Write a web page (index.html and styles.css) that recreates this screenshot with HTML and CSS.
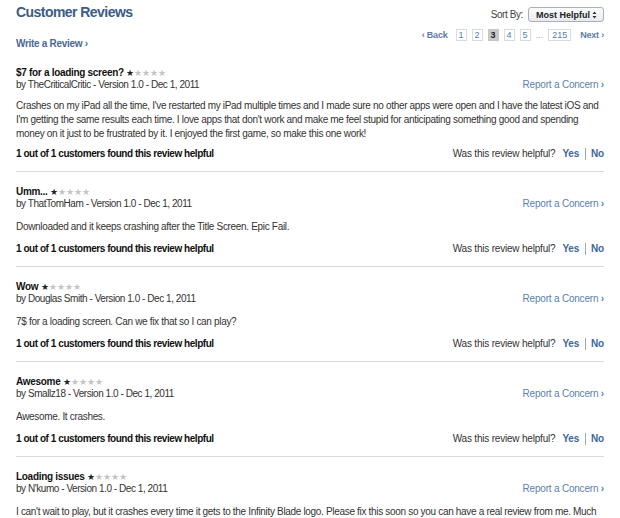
FILE: index.html
```html
<!DOCTYPE html>
<html lang="en">
<head>
<meta charset="utf-8">
<title>Customer Reviews</title>
<link rel="stylesheet" href="styles.css">
</head>
<body>
<div class="page">
  <header class="top">
    <div class="top-left">
      <h1 class="title">Customer Reviews</h1>
      <a class="write" href="#">Write a Review <span class="chev">›</span></a>
    </div>
    <div class="top-right">
      <div class="sort">
        <span class="sort-label">Sort By:</span>
        <div class="select">
          <span class="select-text">Most Helpful</span>
          <svg class="select-arrows" width="5" height="8" viewBox="0 0 5 8"><path d="M0.5 3 L2.5 0.5 L4.5 3 Z M0.5 5 L2.5 7.5 L4.5 5 Z" fill="#333"/></svg>
        </div>
      </div>
      <nav class="pager">
        <a class="pg-link" href="#"><span class="chev">‹</span> Back</a>
        <a class="pg" href="#">1</a>
        <a class="pg" href="#">2</a>
        <span class="pg current">3</span>
        <a class="pg" href="#">4</a>
        <a class="pg" href="#">5</a>
        <span class="pg-dots">...</span>
        <a class="pg wide" href="#">215</a>
        <a class="pg-link next" href="#">Next <span class="chev">›</span></a>
      </nav>
    </div>
  </header>

  <section class="reviews">
    <article class="review">
      <div class="rv-head">
        <div class="rv-meta">
          <div class="rv-title">$7 for a loading screen? <span class="stars"><span class="on">★</span>★★★★</span></div>
          <div class="rv-by">by TheCriticalCritic - Version 1.0 - Dec 1, 2011</div>
        </div>
        <a class="report" href="#">Report a Concern <span class="chev">›</span></a>
      </div>
      <p class="rv-body">Crashes on my iPad all the time, I've restarted my iPad multiple times and I made sure no other apps were open and I have the latest iOS and I'm getting the same results each time. I love apps that don't work and make me feel stupid for anticipating something good and spending money on it just to be frustrated by it. I enjoyed the first game, so make this one work!</p>
      <div class="rv-foot">
        <span class="helpful">1 out of 1 customers found this review helpful</span>
        <span class="vote">Was this review helpful? <a href="#">Yes</a><span class="bar"></span><a href="#">No</a></span>
      </div>
    </article>

    <article class="review">
      <div class="rv-head">
        <div class="rv-meta">
          <div class="rv-title">Umm... <span class="stars"><span class="on">★</span>★★★★</span></div>
          <div class="rv-by">by ThatTomHam - Version 1.0 - Dec 1, 2011</div>
        </div>
        <a class="report" href="#">Report a Concern <span class="chev">›</span></a>
      </div>
      <p class="rv-body">Downloaded and it keeps crashing after the Title Screen. Epic Fail.</p>
      <div class="rv-foot">
        <span class="helpful">1 out of 1 customers found this review helpful</span>
        <span class="vote">Was this review helpful? <a href="#">Yes</a><span class="bar"></span><a href="#">No</a></span>
      </div>
    </article>

    <article class="review">
      <div class="rv-head">
        <div class="rv-meta">
          <div class="rv-title">Wow <span class="stars"><span class="on">★</span>★★★★</span></div>
          <div class="rv-by">by Douglas Smith - Version 1.0 - Dec 1, 2011</div>
        </div>
        <a class="report" href="#">Report a Concern <span class="chev">›</span></a>
      </div>
      <p class="rv-body">7$ for a loading screen. Can we fix that so I can play?</p>
      <div class="rv-foot">
        <span class="helpful">1 out of 1 customers found this review helpful</span>
        <span class="vote">Was this review helpful? <a href="#">Yes</a><span class="bar"></span><a href="#">No</a></span>
      </div>
    </article>

    <article class="review">
      <div class="rv-head">
        <div class="rv-meta">
          <div class="rv-title">Awesome <span class="stars"><span class="on">★</span>★★★★</span></div>
          <div class="rv-by">by Smallz18 - Version 1.0 - Dec 1, 2011</div>
        </div>
        <a class="report" href="#">Report a Concern <span class="chev">›</span></a>
      </div>
      <p class="rv-body">Awesome. It crashes.</p>
      <div class="rv-foot">
        <span class="helpful">1 out of 1 customers found this review helpful</span>
        <span class="vote">Was this review helpful? <a href="#">Yes</a><span class="bar"></span><a href="#">No</a></span>
      </div>
    </article>

    <article class="review">
      <div class="rv-head">
        <div class="rv-meta">
          <div class="rv-title">Loading issues <span class="stars"><span class="on">★</span>★★★★</span></div>
          <div class="rv-by">by N'kumo - Version 1.0 - Dec 1, 2011</div>
        </div>
        <a class="report" href="#">Report a Concern <span class="chev">›</span></a>
      </div>
      <p class="rv-body">I can't wait to play, but it crashes every time it gets to the Infinity Blade logo. Please fix this soon so you can have a real review from me. Much appreciated, and I hope the update comes quickly.</p>
    </article>
  </section>
</div>
</body>
</html>
```

FILE: styles.css
```css
* { box-sizing: border-box; }

html, body {
  margin: 0;
  padding: 0;
  background: #ffffff;
}

body {
  font-family: "Liberation Sans", Arial, Helvetica, sans-serif;
  font-size: 10px;
  color: #333333;
  overflow: hidden;
}

a { text-decoration: none; }

.page {
  width: 620px;
  height: 518px;
  padding: 4px 16px 0 16px;
}

.chev {
  font-weight: bold;
}

/* ---------- header ---------- */
.top {
  display: flex;
  justify-content: space-between;
  align-items: flex-start;
}

.top-left {
  display: flex;
  flex-direction: column;
  align-items: flex-start;
}

.title {
  margin: 0;
  font-size: 14px;
  line-height: 16px;
  font-weight: bold;
  color: #3b5b88;
  letter-spacing: -0.55px;
}

.write {
  margin-top: 18px;
  font-size: 10px;
  line-height: 12px;
  font-weight: bold;
  color: #4a6994;
  letter-spacing: -0.3px;
}

.top-right {
  display: flex;
  flex-direction: column;
  align-items: flex-end;
}

.sort {
  display: flex;
  align-items: center;
  gap: 5px;
  margin-top: 3px;
}

.sort-label {
  font-size: 10px;
  color: #444;
  letter-spacing: -0.4px;
}

.select {
  width: 76px;
  height: 15px;
  border: 1px solid #a9b0ba;
  border-radius: 3px;
  background: linear-gradient(#fbfcfd, #e6eaef);
  display: flex;
  align-items: center;
  justify-content: space-between;
  padding: 0 6px 0 7px;
  font-size: 9px;
  font-weight: bold;
  color: #222;
}

.pager {
  display: flex;
  align-items: center;
  margin-top: 7px;
  gap: 5px;
  font-size: 9px;
  color: #5c7ca6;
}

.pg-link {
  color: #5c7ca6;
  font-size: 9px;
  font-weight: bold;
  margin-right: 3px;
  letter-spacing: -0.2px;
}

.pg-link.next {
  margin-right: 0;
  margin-left: 4px;
}

.pg {
  min-width: 11px;
  height: 12px;
  padding: 0 2px;
  border: 1px solid #d3dbe6;
  display: inline-flex;
  align-items: center;
  justify-content: center;
  color: #5c7ca6;
  font-size: 9px;
}

.pg.wide {
  padding: 0 3px;
}

.pg.current {
  border-color: #c6c6c6;
  background: #c9c9c9;
  color: #222;
  font-weight: bold;
}

.pg-dots {
  color: #8a9bb3;
}

/* ---------- reviews ---------- */
.reviews {
  margin-top: 16px;
}

.review {
  padding: 14px 0 10px 0;
  border-top: 1px solid #d9d9d9;
}

.review:first-child {
  border-top: none;
  padding-top: 1px;
}

.rv-head {
  display: flex;
  justify-content: space-between;
  align-items: flex-end;
}

.rv-title {
  font-size: 10px;
  line-height: 12px;
  font-weight: bold;
  color: #111;
  letter-spacing: -0.3px;
}

.stars {
  font-weight: normal;
  font-size: 9px;
  color: #c4c4c4;
  letter-spacing: 0;
}

.stars .on {
  color: #222;
}

.rv-by {
  font-size: 10px;
  line-height: 12px;
  color: #333;
  letter-spacing: -0.45px;
}

.report {
  font-size: 10px;
  line-height: 12px;
  color: #5b7fae;
  letter-spacing: -0.2px;
}

.rv-body {
  margin: 10px 0 0 0;
  font-size: 10px;
  line-height: 14px;
  color: #333;
  letter-spacing: -0.32px;
}

.review:first-child .rv-body {
  margin-top: 8px;
}

.rv-foot {
  display: flex;
  justify-content: space-between;
  align-items: center;
  margin-top: 8px;
  line-height: 14px;
}

.review:first-child .rv-foot {
  margin-top: 6px;
}

.helpful {
  font-weight: bold;
  color: #111;
  letter-spacing: -0.45px;
}

.vote {
  display: inline-flex;
  align-items: center;
  color: #333;
  letter-spacing: -0.2px;
}

.vote a {
  color: #3d679c;
  font-weight: bold;
}

.vote a:first-of-type {
  margin-left: 7px;
}

.bar {
  display: inline-block;
  width: 1px;
  height: 12px;
  background: #9aa;
  margin: 0 5px 0 6px;
}
```
